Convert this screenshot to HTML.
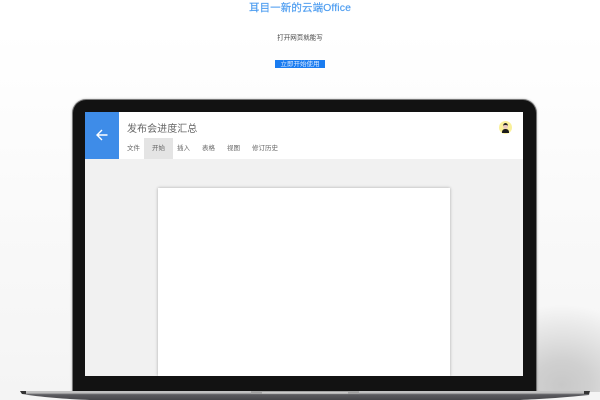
<!DOCTYPE html>
<html lang="zh">
<head>
<meta charset="utf-8">
<style>
html,body{margin:0;padding:0}
body{width:600px;height:400px;overflow:hidden;position:relative;background:linear-gradient(180deg,#fff 0,#fff 30px,#f4f4f4 400px);font-family:"Liberation Sans","Noto Sans CJK SC",sans-serif}
div{position:absolute;box-sizing:border-box}
.t{white-space:nowrap;text-align:center}
.tab{top:143px;font-size:6.5px;line-height:12px;color:#666;white-space:nowrap}
</style>
</head>
<body>
<div style="left:537px;top:300px;width:63px;height:92px;background:radial-gradient(ellipse 95px 80px at 25px 85px,#c8c8c8 0,#d0d0d0 30%,#e2e2e2 62%,rgba(243,243,243,0) 100%)"></div>
<div class="t" style="left:200px;top:1px;width:200px;height:15px;font-size:10.5px;line-height:15px;color:#4a9bf0;letter-spacing:.1px;-webkit-text-stroke:.15px #4a9bf0">耳目一新的云端Office</div>
<div class="t" style="left:250px;top:33px;width:100px;height:10px;font-size:6.5px;line-height:10px;color:#444;transform:translateY(.5px)">打开网页就能写</div>
<div style="left:275px;top:60px;width:50px;height:8px;background:#1a7cf0"></div>
<div class="t" style="left:275px;top:60.5px;width:50px;height:8px;font-size:6.5px;line-height:8px;color:#d8e8ff">立即开始使用</div>

<div style="left:72px;top:99px;width:465px;height:294px;background:#121212;border-radius:14px 14px 0 0;border:1px solid #777;border-bottom:0;box-shadow:0 0 2px rgba(0,0,0,.25)"></div>
<div style="left:85px;top:112px;width:438px;height:264px;background:#f1f1f1;overflow:hidden">
  <div style="left:0;top:0;width:438px;height:47px;background:#fff"></div>
  <div style="left:0;top:0;width:34px;height:47px;background:#3e8ce8"></div>
  <svg style="position:absolute;left:10px;top:16px" width="14" height="14" viewBox="0 0 14 14"><path d="M12.5 7H2.5M7 2L2 7l5 5" fill="none" stroke="#fff" stroke-width="1.4"/></svg>
  <div style="left:59px;top:26px;width:29px;height:21px;background:#e4e4e4"></div>
  <div style="left:73px;top:76px;width:292px;height:188px;background:#fff;box-shadow:0 0 3px rgba(0,0,0,.3)"></div>
  <div style="left:414px;top:9px;width:13px;height:13px;border-radius:50%;background:#f9f09a;overflow:hidden">
    <div style="left:4px;top:2px;width:5px;height:6px;border-radius:50%;background:#e9c9c0;border-top:2px solid #222"></div>
    <div style="left:3px;top:8px;width:7px;height:4px;border-radius:3px 3px 0 0;background:#1b1b1b"></div>
  </div>
</div>
<div style="left:127px;top:123px;height:14px;font-size:10px;line-height:14px;color:#666;white-space:nowrap;letter-spacing:.05px">发布会进度汇总</div>
<div class="tab" style="left:127px">文件</div>
<div class="tab" style="left:152px">开始</div>
<div class="tab" style="left:177px">插入</div>
<div class="tab" style="left:202px">表格</div>
<div class="tab" style="left:227px">视图</div>
<div class="tab" style="left:252px">修订历史</div>

<svg style="position:absolute;left:0;top:0" width="600" height="400" viewBox="0 0 600 400">
  <defs>
    <linearGradient id="b" x1="0" y1="391" x2="0" y2="400" gradientUnits="userSpaceOnUse">
      <stop offset="0" stop-color="#c4c4c4"/><stop offset=".22" stop-color="#bdbdbd"/><stop offset=".4" stop-color="#5c5c60"/><stop offset="1" stop-color="#47474b"/>
    </linearGradient>
  </defs>
  <path d="M20 391H590L589 395C560 398 540 399 520 400H90C65 399 40 397 22 394Z" fill="url(#b)"/>
  <path d="M20 391H26V394L22 394Z" fill="#333"/>
  <path d="M584 391H590L589 394H584Z" fill="#333"/>
  <rect x="251" y="391" width="108" height="3" fill="#a3a3a3"/>
  <rect x="262" y="392" width="86" height="1.5" fill="#c9c9c9"/>
</svg>
</body>
</html>
